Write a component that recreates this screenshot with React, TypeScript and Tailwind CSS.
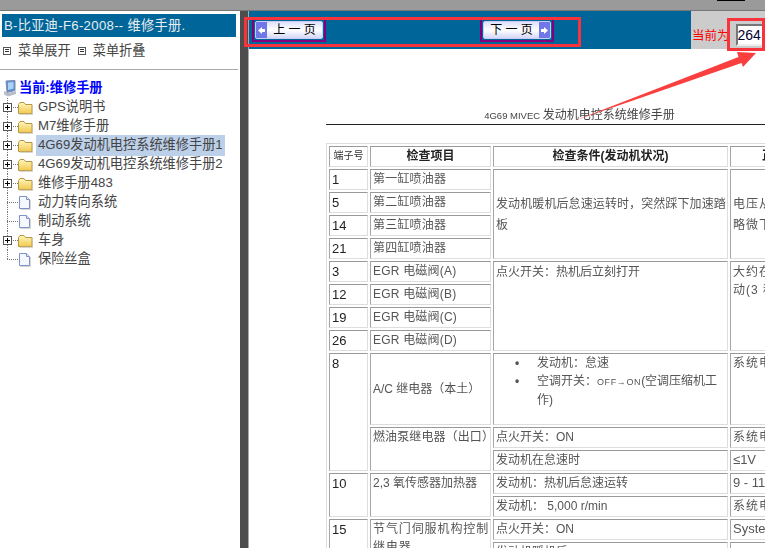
import type { ReactNode } from 'react';

const sans = "font-['Liberation_Sans','Noto_Sans_CJK_SC',sans-serif]";

function Connector({ plus, last }: { plus?: boolean; last?: boolean }) {
  return (
    <svg width="18" height="19" className="shrink-0">
      <line x1="7.5" y1="0" x2="7.5" y2={last ? 10 : 19} stroke="#777" strokeDasharray="1 1" />
      <line x1="7" y1="9.5" x2="18" y2="9.5" stroke="#777" strokeDasharray="1 1" />
      {plus && (
        <g>
          <rect x="3.5" y="5.5" width="8" height="8" fill="#fff" stroke="#555" />
          <path d="M5 9.5h5M7.5 7v5" stroke="#000" />
        </g>
      )}
    </svg>
  );
}

function Folder() {
  return (
    <svg width="15" height="14" viewBox="0 0 15 14" className="shrink-0">
      <defs>
        <linearGradient id="fold" x1="0" y1="0" x2="0" y2="1">
          <stop offset="0" stopColor="#fff6c0" />
          <stop offset="1" stopColor="#f2c94e" />
        </linearGradient>
      </defs>
      <path d="M.5 3.5 2 1.5h4L7.5 3.5h6.5v9H.5z" fill="url(#fold)" stroke="#b8963f" />
      <path d="M1.5 13.2h13.3v-8.5" fill="none" stroke="#c9c4b0" />
    </svg>
  );
}

function Page() {
  return (
    <svg width="15" height="15" viewBox="0 0 15 15" className="shrink-0">
      <path d="M1.5 1.5h7l3 3v9h-10z" fill="#f6f8ff" stroke="#7f92c8" />
      <path d="M8.5 1.5v3h3" fill="#dfe6f8" stroke="#7f92c8" />
      <path d="M12.5 5v9.5h-10" fill="none" stroke="#d5d5d5" />
    </svg>
  );
}

function Monitor() {
  return (
    <svg width="14" height="17" viewBox="0 0 14 17" className="shrink-0">
      <path d="M3 1 12 0.5v10l-8 2z" fill="#5f8fd8" stroke="#7c8aa8" />
      <path d="M5 2.5 10.5 2v6.5l-5.5 1.5z" fill="#a9d2f5" />
      <path d="M1 11 5 13l8-2v3l-8 2.5L1 14.5z" fill="#b8bcc8" />
    </svg>
  );
}

function TreeRow({ label, kind, active, last }: { label: string; kind: 'folder' | 'page'; active?: boolean; last?: boolean }) {
  return (
    <div className="flex items-center h-[19px]">
      <Connector plus={kind === 'folder'} last={last} />
      {kind === 'folder' ? <Folder /> : <Page />}
      <span className={`ml-[3px] pl-[2px] pr-[3px] h-[21px] leading-[20px] whitespace-nowrap ${active ? 'bg-[#bdd0e9] w-[189px]' : ''}`}>{label}</span>
    </div>
  );
}

function MenuToggle({ label }: { label: string }) {
  return (
    <span className="flex items-center gap-[7px]">
      <span className="w-[8px] h-[8px] border border-[#555] flex flex-col justify-center gap-[1px] px-[1px]">
        <span className="h-[1px] bg-[#333]" />
        <span className="h-[1px] bg-[#333]" />
      </span>
      {label}
    </span>
  );
}

function PageButton({ label, dir }: { label: string; dir: 'prev' | 'next' }) {
  const arrow = (
    <span className="w-[11px] h-full bg-[#6f78e6] flex items-center justify-center">
      <svg width="9" height="9" viewBox="0 0 9 9">
        {dir === 'prev' ? (
          <path d="M1 4.5 5 1v2h3v3H5v2z" fill="#fff" />
        ) : (
          <path d="M8 4.5 4 1v2H1v3h3v2z" fill="#fff" />
        )}
      </svg>
    </span>
  );
  return (
    <div className="w-[74px] h-[24px] border-[2px] border-[#800080] p-[1px] flex">
      <div className="flex-1 flex items-center rounded-[2px] overflow-hidden border border-[#c9cdf5] bg-gradient-to-b from-[#dfe1fb] via-white to-[#d4d7f7]">
        {dir === 'prev' && arrow}
        <span className={`flex-1 text-center text-[12px] text-black whitespace-pre ${sans}`}>{label}</span>
        {dir === 'next' && arrow}
      </div>
    </div>
  );
}

const cell = 'border border-t-[#999] border-l-[#a5a5a5] border-r-[#ddd] border-b-[#ddd] px-[2px] py-0 align-top leading-[18px] h-[21px]';

function Td({ children, rowSpan, className = '' }: { children?: ReactNode; rowSpan?: number; className?: string }) {
  return (
    <td rowSpan={rowSpan} className={`${cell} ${className}`}>
      {children}
    </td>
  );
}

function Num({ n, rowSpan }: { n: string; rowSpan?: number }) {
  return (
    <Td rowSpan={rowSpan} className="text-[13px] text-[#222] pt-[1px]">
      {n}
    </Td>
  );
}

function Name({ text }: { text: string }) {
  return <Td className="tracking-[0.2px] whitespace-nowrap">{text}</Td>;
}

export default function App() {
  const tree: { label: string; kind: 'folder' | 'page'; active?: boolean }[] = [
    { label: 'GPS说明书', kind: 'folder' },
    { label: 'M7维修手册', kind: 'folder' },
    { label: '4G69发动机电控系统维修手册1', kind: 'folder', active: true },
    { label: '4G69发动机电控系统维修手册2', kind: 'folder' },
    { label: '维修手册483', kind: 'folder' },
    { label: '动力转向系统', kind: 'page' },
    { label: '制动系统', kind: 'page' },
    { label: '车身', kind: 'folder' },
    { label: '保险丝盒', kind: 'page' },
  ];

  return (
    <div className={`relative w-[765px] h-[548px] overflow-hidden bg-white flex flex-col ${sans}`}>
      {/* barra superior */}
      <div className="h-[11px] shrink-0 bg-[#9a9a9a] border-b border-[#777] pl-[717px]">
        <div className="w-[28px] h-[1px] bg-black" />
      </div>

      <div className="flex-1 flex min-h-0">
        {/* menu esquerdo */}
        <aside className="w-[240px] shrink-0 pt-[3px] text-[13.2px] text-[#444]">
          <div className="ml-[2px] w-[234px] h-[23px] bg-[#006699] text-[#e8eef2] pl-[2px] leading-[23px] whitespace-nowrap tracking-[0.3px]">
            B-比亚迪-F6-2008-- 维修手册.
          </div>
          <div className="flex gap-[7px] pl-[3px] h-[26px] items-center mt-[1px]">
            <MenuToggle label="菜单展开" />
            <MenuToggle label="菜单折叠" />
          </div>
          <div className="h-[1px] w-[238px] bg-[#aaa] mt-[5px]" />
          <div className="flex items-center h-[20px] mt-[8px] pl-[3px] gap-[2px] font-bold text-[#0000ff]">
            <Monitor />
            当前:维修手册
          </div>
          {tree.map((t, i) => (
            <TreeRow key={t.label} label={t.label} kind={t.kind} active={t.active} last={i === tree.length - 1} />
          ))}
        </aside>

        <div className="w-[8px] shrink-0 bg-[#4d4d4d]" />
        <div className="w-[1px] shrink-0 bg-[#aaa]" />

        {/* conteúdo */}
        <main className="flex-1 min-w-0 flex flex-col overflow-hidden">
          <div className="h-[38px] shrink-0 flex bg-[#006699]">
            <div className="flex-1 pl-[3px] pt-[7px] flex items-start">
              <PageButton label="上 一 页" dir="prev" />
              <span className="w-[154px] shrink-0" />
              <PageButton label="下 一 页" dir="next" />
            </div>
            <div className="w-[74px] shrink-0 bg-[#cccccc] flex items-end pb-[3px] pl-[1px]">
              <span className="text-[12.5px] text-[#ff0000] whitespace-nowrap">当前为</span>
              <input
                readOnly
                value="264"
                className="ml-[6px] w-[32px] h-[22px] shrink-0 bg-white text-[14px] text-[#000033] pl-0 border-[2px] border-t-[#777] border-l-[#777] border-r-[#eee] border-b-[#eee] outline-none"
              />
            </div>
          </div>

          {/* página digitalizada */}
          <div className="flex-1 overflow-hidden pl-[77px] blur-[0.35px]">
            <div className="w-[507px] h-[76px] flex flex-col justify-end border-b border-[#222] text-center text-[12px] text-[#444]">
              <span><span className="text-[9.5px]">4G69 MIVEC </span>发动机电控系统维修手册</span>
            </div>
            <table className="mt-[18px] border-separate border-spacing-[2px] border border-[#ddd] table-fixed w-[519px] text-[12px] text-[#555]">
              <colgroup>
                <col className="w-[39px]" />
                <col className="w-[121px]" />
                <col className="w-[235px]" />
                <col className="w-[112px]" />
              </colgroup>
              <tbody>
                <tr>
                  <Td className="text-[10px] text-center text-[#333]">端子号</Td>
                  <Td className="font-bold text-center text-[#222]">检查项目</Td>
                  <Td className="font-bold text-center text-[#222]">检查条件(发动机状况)</Td>
                  <Td className="font-bold text-center text-[#222]">正常状态</Td>
                </tr>
                <tr>
                  <Num n="1" />
                  <Name text="第一缸喷油器" />
                  <Td rowSpan={4} className="pt-[24px] pr-0 tracking-[0.1px] !leading-[21px]">发动机暖机后怠速运转时，突然踩下加速踏板</Td>
                  <Td rowSpan={4} className="pt-[24px] tracking-[1px] !leading-[21px]">电压从<br />略微下</Td>
                </tr>
                <tr>
                  <Num n="5" />
                  <Name text="第二缸喷油器" />
                </tr>
                <tr>
                  <Num n="14" />
                  <Name text="第三缸喷油器" />
                </tr>
                <tr>
                  <Num n="21" />
                  <Name text="第四缸喷油器" />
                </tr>
                <tr>
                  <Num n="3" />
                  <Name text="EGR 电磁阀(A)" />
                  <Td rowSpan={4} className="pt-[1px]">点火开关：热机后立刻打开</Td>
                  <Td rowSpan={4} className="pt-[1px] tracking-[1px]">大约在<br />动(3 秒</Td>
                </tr>
                <tr>
                  <Num n="12" />
                  <Name text="EGR 电磁阀(B)" />
                </tr>
                <tr>
                  <Num n="19" />
                  <Name text="EGR 电磁阀(C)" />
                </tr>
                <tr>
                  <Num n="26" />
                  <Name text="EGR 电磁阀(D)" />
                </tr>
                <tr>
                  <Num n="8" rowSpan={3} />
                  <Td className="!align-middle h-[72px] whitespace-nowrap">A/C 继电器（本土）</Td>
                  <Td className="h-[72px]">
                    <div className="flex">
                      <span className="w-[41px] pl-[19px] shrink-0 font-bold">•</span>
                      <span>发动机：怠速</span>
                    </div>
                    <div className="flex">
                      <span className="w-[41px] pl-[19px] shrink-0 font-bold">•</span>
                      <span className="whitespace-nowrap">
                        空调开关：<span className="text-[9px] tracking-[0.6px]">OFF→ON</span>(空调压缩机工<br />作)
                      </span>
                    </div>
                  </Td>
                  <Td className="tracking-[1px]">系统电</Td>
                </tr>
                <tr>
                  <Td rowSpan={2} className="whitespace-nowrap tracking-[0.1px]">燃油泵继电器（出口）</Td>
                  <Td>点火开关：ON</Td>
                  <Td className="tracking-[1px]">系统电</Td>
                </tr>
                <tr>
                  <Td>发动机在怠速时</Td>
                  <Td className="text-[13px]">≤1V</Td>
                </tr>
                <tr>
                  <Num n="10" rowSpan={2} />
                  <Td rowSpan={2}>2,3 氧传感器加热器</Td>
                  <Td>发动机：热机后怠速运转</Td>
                  <Td className="text-[13px]">9 - 11 V</Td>
                </tr>
                <tr>
                  <Td>发动机： 5,000 r/min</Td>
                  <Td className="tracking-[1px]">系统电</Td>
                </tr>
                <tr>
                  <Num n="15" rowSpan={2} />
                  <Td rowSpan={2} className="pr-0 tracking-[0.9px]">节气门伺服机构控制继电器</Td>
                  <Td>点火开关：ON</Td>
                  <Td className="text-[13px] whitespace-nowrap">System</Td>
                </tr>
                <tr>
                  <Td>发动机暖机后</Td>
                  <Td />
                </tr>
              </tbody>
            </table>
          </div>
        </main>
      </div>

      {/* marcações vermelhas sobre a captura */}
      <div className="absolute left-[244px] top-[17px] w-[337px] h-[30px] border-[3px] border-[#f8333c] pointer-events-none" />
      <div className="absolute left-[727px] top-[18px] w-[38px] h-[33px] border-[3px] border-[#f8333c] pointer-events-none" />
      <svg className="absolute left-0 top-0 pointer-events-none" width="765" height="548">
        <path d="M575 120.5 738.5 57 737 52 756 53 743 67 741.5 63z" fill="#f9403f" />
      </svg>
    </div>
  );
}
